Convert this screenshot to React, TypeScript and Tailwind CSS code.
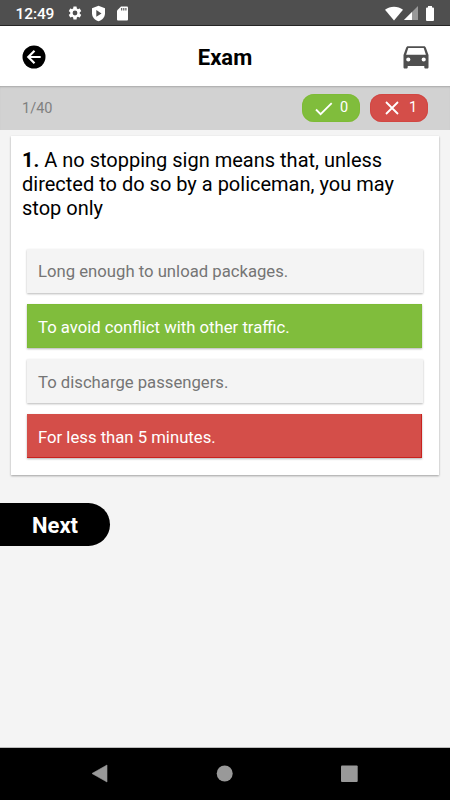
import React from 'react';

type Tone = 'plain' | 'right' | 'wrong';

const tones: Record<Tone, string> = {
  plain: 'w-[396px] bg-[#f4f4f4] text-[#757575] shadow-[0_1px_2px_rgba(0,0,0,0.28)]',
  right: 'w-[395px] bg-[#80bd3c] text-white shadow-[0_1px_2px_rgba(0,0,0,0.3),inset_0_0_1px_#69b000]',
  wrong: 'w-[395px] bg-[#d44e49] text-white shadow-[0_1px_2px_rgba(0,0,0,0.3),inset_-1px_-1px_0_#c8221e]',
};

function Option({ tone, label, pad = 'pt-[3px]' }: { tone: Tone; label: string; pad?: string }) {
  return (
    <div className={`flex h-[44px] items-center pl-[11px] text-[16.7px] ${tones[tone]}`}>
      <span className={`whitespace-nowrap ${pad}`}>{label}</span>
    </div>
  );
}

export default function App() {
  return (
    <div className="flex h-[800px] w-[450px] flex-col overflow-hidden bg-[#f4f4f4] font-['Roboto',sans-serif]">
      <div className="flex h-[26px] shrink-0 items-center border-b border-[#252525] bg-[#4f4f4f] text-white">
        <span className="ml-[15.5px] mt-[4px] w-[51px] text-[15.5px] font-medium leading-none tracking-[-0.1px]">12:49</span>
        <svg className="mt-px h-[16px] w-[16px]" viewBox="0 0 24 24" fill="currentColor"><path d="M19.14 12.94c.04-.3.06-.61.06-.94 0-.32-.02-.64-.07-.94l2.03-1.58a.49.49 0 0 0 .12-.61l-1.92-3.32a.488.488 0 0 0-.59-.22l-2.39.96c-.5-.38-1.03-.7-1.62-.94l-.36-2.54a.484.484 0 0 0-.48-.41h-3.84c-.24 0-.43.17-.47.41l-.36 2.54c-.59.24-1.13.57-1.62.94l-2.39-.96c-.22-.08-.47 0-.59.22L2.74 8.870c-.12.21-.08.47.12.61l2.03 1.58c-.05.3-.09.63-.09.94s.02.64.07.94l-2.03 1.58a.49.49 0 0 0-.12.61l1.92 3.32c.12.22.37.29.59.22l2.39-.96c.5.38 1.03.7 1.62.94l.36 2.54c.05.24.24.41.48.41h3.84c.24 0 .44-.17.47-.41l.36-2.54c.59-.24 1.13-.56 1.62-.94l2.39.96c.22.08.47 0 .59-.22l1.92-3.32c.12-.22.07-.47-.12-.61l-2.01-1.58zM12 15.6A3.6 3.6 0 1 1 12 8.4a3.6 3.6 0 0 1 0 7.2z" /></svg>
        <svg className="ml-[8.5px] mt-px h-[17px] w-[15px]" viewBox="0 0 15 17"><path d="M7.5.8 14 3.3v5c0 3.7-2.6 6.8-6.5 8-3.9-1.2-6.5-4.3-6.5-8v-5z" fill="#fff" /><path d="m5.3 5 5.2 3.4-5.2 3.3z" fill="#4f4f4f" /></svg>
        <svg className="ml-[11px] mt-px h-[15px] w-[11px]" viewBox="0 0 11 15"><path d="M4 .5h6a1 1 0 0 1 1 1v12a1 1 0 0 1-1 1H1a1 1 0 0 1-1-1v-9z" fill="#fff" /><path d="M4.700 2v2.600M6.800 2v2.600M8.900 2v2.600" stroke="#4f4f4f" strokeWidth="1.1" /></svg>
        <svg className="ml-auto mt-px h-[15px] w-[18px]" viewBox="0 0 18 15"><path d="M0 3.800C5-.3 13-.3 18 3.800L9 14.500z" fill="#fff" /></svg>
        <svg className="ml-[1px] mt-px h-[14px] w-[14px]" viewBox="0 0 14 14"><path d="M14 0v14H0z" fill="#999" /><path d="M8 6v8H0z" fill="#fff" /></svg>
        <svg className="ml-[8px] mr-[16px] mt-px h-[15px] w-[8px]" viewBox="0 0 8 15"><path d="M2 0h4v1.500h1a1 1 0 0 1 1 1V14a1 1 0 0 1-1 1H1a1 1 0 0 1-1-1V2.500a1 1 0 0 1 1-1h1z" fill="#fff" /></svg>
      </div>

      <header className="grid h-[60px] shrink-0 grid-cols-[1fr_auto_1fr] items-center bg-white">
        <svg className="ml-[22px] mt-[2px] h-[24px] w-[24px]" viewBox="0 0 24 24"><circle cx="12" cy="12" r="11.500" /><path d="M18.700 12H6.500M12.500 5.800 6.300 12l6.200 6.200" fill="none" stroke="#fff" strokeWidth="2.200" /></svg>
        <h1 className="mt-[3px] text-[22px] font-bold leading-none text-black">Exam</h1>
        <svg className="ml-auto mr-[21px] mt-[3px] h-[23px] w-[26px]" viewBox="0 0 26 23"><path fillRule="evenodd" fill="#4f4f4f" d="M5 .3h16c1 0 1.600.6 1.900 1.500L25.500 9v12.200c0 .8-.5 1.300-1.300 1.300h-1.600c-.8 0-1.300-.5-1.300-1.300V20H4.700v1.200c0 .8-.5 1.300-1.300 1.300H1.800c-.8 0-1.300-.5-1.300-1.300V9l2.600-7.200C3.400.9 4 .3 5 .3zM5.300 2 3.100 8.700h19.800L20.700 2zM5.300 11.400a2.100 2.100 0 1 0 0 4.200 2.100 2.100 0 0 0 0-4.200zm15.400 0a2.100 2.100 0 1 0 0 4.200 2.100 2.100 0 0 0 0-4.200z" /></svg>
      </header>

      <div className="flex h-[44px] shrink-0 items-center bg-[#d2d2d2] pr-[22px] shadow-[inset_0_2px_2px_-1px_rgba(0,0,0,0.2)]">
        <span className="ml-[22px] mr-auto pt-[2px] text-[14.5px] text-[#808080]">1/40</span>
        <div className="flex h-[28px] w-[58px] items-center rounded-[12px] bg-[#80bd3c] text-[14.500px] text-white shadow-[inset_0_0_1px_#69b000]">
          <svg className="ml-[13px] mt-[1px] h-[14px] w-[18px]" viewBox="0 0 18 14"><path d="m1 7.500 4.600 4.700L16.700 1.200" fill="none" stroke="#fff" strokeWidth="1.800" /></svg>
          <span className="ml-[7px]">0</span>
        </div>
        <div className="ml-[10px] flex h-[28px] w-[58px] items-center rounded-[12px] bg-[#d44e49] text-[14.500px] text-white shadow-[inset_0_0_1px_#c40c0c]">
          <svg className="ml-[15px] h-[14px] w-[14px]" viewBox="0 0 14 14"><path d="m1 1 12 12M13 1 1 13" fill="none" stroke="#fff" strokeWidth="1.800" /></svg>
          <span className="ml-[10px]">1</span>
        </div>
      </div>

      <main className="ml-[11px] mt-[6px] h-[339px] w-[428px] shrink-0 bg-white shadow-[0_1px_2px_rgba(0,0,0,0.35)]">
        <p className="h-[113px] whitespace-nowrap pl-[11px] pt-[12px] text-[20px] leading-[24px] text-black">
          <b>1.</b> A no stopping sign means that, unless<br />
          directed to do so by a policeman, you may<br />
          stop only
        </p>
        <div className="flex flex-col gap-[11px] pl-[16px]">
          <Option tone="plain" label="Long enough to unload packages." pad="pt-[1px]" />
          <Option tone="right" label="To avoid conflict with other traffic." />
          <Option tone="plain" label="To discharge passengers." />
          <Option tone="wrong" label="For less than 5 minutes." />
        </div>
      </main>

      <button className="mt-[28px] h-[43px] w-[109.5px] shrink-0 rounded-r-[22px] bg-black pl-[32px] pt-[2px] text-left text-[22px] font-bold leading-none text-white">Next</button>

      <nav className="mt-auto h-[53px] shrink-0 border-t border-[#bbb] bg-black">
        <svg className="h-[52px] w-[450px]" viewBox="0 0 450 52" fill="#999"><path d="M92 25.500 107 17v17z" stroke="#999" strokeLinejoin="round" strokeWidth=".6" /><circle cx="224.700" cy="25.500" r="8" /><rect x="341" y="17.500" width="16.700" height="16.500" rx="1" /></svg>
      </nav>
    </div>
  );
}
